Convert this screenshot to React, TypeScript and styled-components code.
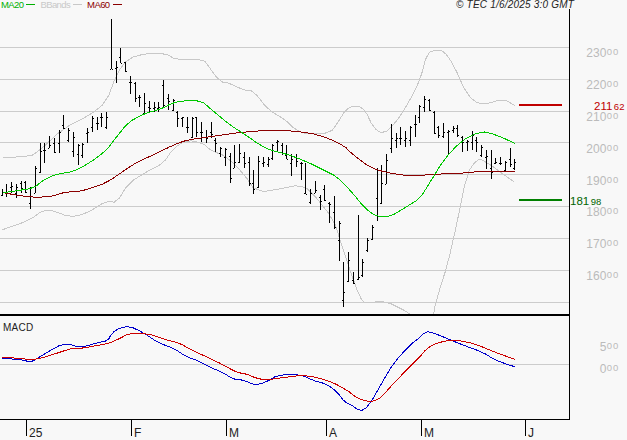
import styled, { createGlobalStyle } from "styled-components";

type Pt = [number, number];

// rounds the corners of a traced line a little
const smooth = (pts: Pt[]): Pt[] => {
  const out: Pt[] = [pts[0]];
  for (let i = 0; i < pts.length - 1; i++) {
    const [ax, ay] = pts[i];
    const [bx, by] = pts[i + 1];
    out.push([ax * 0.75 + bx * 0.25, ay * 0.75 + by * 0.25]);
    out.push([ax * 0.25 + bx * 0.75, ay * 0.25 + by * 0.75]);
  }
  out.push(pts[pts.length - 1]);
  return out;
};

// all data traced off the picture at 3x, so one unit is a third of a pixel
const line = (offsetY: number, ...parts: Pt[][]) =>
  smooth(parts.flat())
    .map(([x, y]) => `${(x / 3).toFixed(1)},${(y / 3 + offsetY).toFixed(1)}`)
    .join(" ");

const shift = (dx: number, dy: number, pts: Pt[]): Pt[] =>
  pts.map(([x, y]) => [x + dx, y + dy]);

const MA20 = line(
  0,
  [[8, 578], [50, 572], [100, 565], [130, 540], [170, 522], [220, 515], [270, 488], [320, 450], [350, 410], [385, 367], [430, 342], [480, 328], [520, 308], [550, 302], [605, 303]],
  shift(630, 0, [[0, 325], [60, 375], [100, 400], [150, 435], [185, 452], [230, 462], [290, 485], [345, 512], [380, 530], [420, 570], [465, 625], [500, 650], [540, 650], [590, 620]]),
  shift(1251, 0, [[9, 595], [40, 545], [80, 480], [130, 425], [190, 393], [240, 405], [293, 430]]),
);

const MA60 = line(
  0,
  [[8, 578], [60, 587], [100, 592], [155, 590], [190, 577], [240, 574], [270, 565], [320, 548], [375, 510], [410, 487], [470, 460], [520, 435], [560, 420]],
  shift(630, 0, [[0, 410], [50, 403], [95, 397], [170, 391], [250, 392], [330, 405], [400, 435], [430, 465], [480, 502], [530, 518], [600, 528]]),
  shift(1251, 0, [[9, 526], [70, 522], [130, 520], [200, 513], [280, 513], [293, 516]]),
);

const BAND_UP = line(
  0,
  [[8, 472], [90, 470], [120, 450], [190, 385], [270, 345], [320, 305], [350, 220], [385, 175], [440, 160], [495, 160], [530, 180], [610, 177]],
  shift(630, 0, [[0, 205], [30, 245], [60, 250], [100, 270], [130, 272], [175, 330], [220, 355], [260, 392], [290, 402], [360, 400], [385, 365], [410, 325], [440, 316], [465, 330], [490, 383], [520, 403], [560, 365], [600, 300]]),
  shift(1251, 0, [[9, 240], [30, 160], [55, 150], [80, 152], [110, 195], [150, 285], [190, 316], [260, 297], [293, 316]]),
);

// runs below the bottom of the price panel around x=420 and gets cut off there
const BAND_DOWN = line(
  0,
  [[5, 690], [90, 660], [130, 630], [160, 632], [210, 652], [260, 640], [320, 602], [350, 608], [385, 550], [440, 515], [490, 490], [520, 445], [560, 420], [610, 430]],
  shift(630, 0, [[0, 450], [50, 470], [100, 520], [140, 578], [220, 565], [265, 555], [300, 570], [372, 660]]),
  shift(630, 660, [[390, 60], [420, 150], [450, 235], [470, 252], [520, 240], [605, 282], [640, 320], [670, 320]]),
  shift(1251, 660, [[48, 282], [70, 200], [90, 140], [122, 0]]),
  shift(1251, 0, [[150, 520], [180, 478], [200, 480], [290, 545]]),
);

const MACD_LINE = line(
  220,
  [[5, 414], [45, 418], [70, 420], [92, 427], [120, 410], [150, 392], [185, 373], [210, 373], [230, 380], [255, 380], [290, 368], [323, 363], [335, 340], [360, 323], [390, 319], [430, 338], [475, 368], [520, 385], [560, 410], [600, 425]],
  shift(630, 0, [[0, 442], [40, 458], [70, 478], [100, 480], [133, 495], [165, 488], [205, 464], [275, 464], [310, 482], [350, 492], [380, 515], [405, 547], [425, 555], [450, 574], [475, 560], [515, 490], [550, 430], [600, 375]]),
  shift(1251, 0, [[9, 352], [20, 340], [37, 334], [90, 355], [130, 372], [200, 398], [230, 418], [270, 433], [293, 440]]),
);

const MACD_SIGNAL = line(
  220,
  [[5, 412], [45, 414], [85, 418], [110, 418], [145, 408], [200, 390], [215, 385], [255, 384], [280, 378], [320, 372], [350, 360], [390, 339], [440, 340], [500, 360], [540, 370], [570, 388]],
  shift(630, 0, [[0, 415], [40, 435], [80, 457], [110, 462], [140, 475], [170, 480], [210, 474], [275, 466], [320, 472], [370, 488], [410, 510], [440, 533], [470, 544], [495, 543], [515, 530], [560, 480]]),
  shift(1251, 0, [[9, 410], [25, 390], [45, 375], [75, 365], [105, 360], [130, 362], [175, 372], [230, 395], [293, 418]]),
);

// high, low, open, close
const BARS: number[][] = [
  [568, 587, 585, 575], [553, 590, 580, 575], [545, 578, 562, 558], [553, 595, 580, 562],
  [543, 578, 548, 565], [543, 578, 545, 575], [562, 628, 610, 565], [498, 580, 578, 505],
  [430, 518, 516, 452], [430, 488, 450, 450], [408, 445, 443, 435], [415, 458, 428, 455],
  [390, 460, 428, 395], [345, 388, 375, 385], [385, 425, 420, 390], [397, 470, 452, 410],
  [432, 494, 463, 435], [430, 475, 465, 432], [385, 430, 400, 397], [348, 395, 380, 355],
  [352, 390, 370, 368], [338, 382, 352, 352], [335, 388, 382, 352], [57, 208, 206, 207],
  [183, 248, 205, 200], [145, 190, 170, 188], [185, 215, 187, 213], [228, 282, 247, 247],
  [247, 305, 250, 293], [285, 320, 292, 290], [280, 342, 338, 310], [303, 335, 320, 325],
  [305, 335, 325, 322], [305, 335, 325, 322], [240, 325, 255, 315], [283, 330, 295, 302],
  [297, 332, 330, 300], [333, 380, 335, 355], [350, 380, 355, 352], [352, 400, 380, 380],
  [350, 415, 412, 355], [350, 410, 352, 395], [367, 425, 395, 395], [390, 430, 412, 415],
  [365, 415, 395, 403], [415, 455, 420, 430], [440, 470, 460, 445], [445, 498, 470, 448],
  [460, 548, 468, 533], [435, 505, 503, 485], [432, 490, 485, 460], [455, 505, 470, 490],
  [472, 558, 485, 548], [510, 583, 548, 568], [468, 565, 560, 483], [472, 502, 490, 485],
  [472, 500, 492, 478], [432, 480, 475, 435], [420, 455, 425, 423], [428, 465, 435, 458],
  [435, 478, 465, 478], [462, 527, 490, 478], [462, 500, 470, 482], [487, 540, 490, 488],
  [488, 583, 578, 582], [568, 612, 605, 580], [543, 580, 578, 570], [585, 630, 590, 603],
  [555, 602, 568, 600], [605, 670, 608, 612], [588, 688, 635, 680], [664, 782, 720, 670],
  [787, 920, 900, 875], [757, 845, 842, 780], [815, 853, 840, 850], [645, 840, 838, 830],
  [778, 832, 825, 785], [715, 755, 750, 720], [675, 720, 718, 680], [503, 663, 595, 510],
  [495, 612, 610, 550], [462, 553, 551, 480], [372, 458, 445, 415], [400, 443, 420, 415],
  [382, 435, 415, 415], [392, 440, 420, 415], [378, 437, 420, 380], [345, 410, 372, 372],
  [315, 368, 352, 318], [288, 335, 320, 298], [298, 333, 300, 330], [333, 402, 335, 400],
  [378, 415, 380, 405], [368, 415, 408, 395], [390, 462, 395, 392], [378, 400, 390, 385],
  [375, 412, 385, 405], [408, 457, 410, 425], [420, 453, 425, 423], [393, 450, 425, 405],
  [410, 455, 420, 425], [435, 472, 465, 440], [450, 508, 470, 468], [450, 537, 505, 515],
  [475, 493, 490, 485], [472, 495, 490, 488], [483, 513, 510, 485], [445, 500, 478, 492],
  [478, 510, 505, 485],
];

const barsPath = BARS.map(([high, low, open, close], i) => {
  const x = Math.round(1.67 + i * 4.747);
  const t = Math.round(high / 3);
  const b = Math.round(low / 3);
  const o = Math.round(open / 3);
  const c = Math.round(close / 3);
  return `M${x} ${t}h1v${b - t}h-1zM${x - 1} ${o}h1v1h-1zM${x + 1} ${c}h1v1h-1z`;
}).join("");

const PRICE_GRID = [47, 79, 111, 142, 174, 206, 238, 270, 302];
const PRICE_SCALE = ["230", "220", "210", "200", "190", "180", "170", "160"];
const MACD_SCALE = ["5", "0"];
const MONTHS: { label: string; width: number }[] = [
  { label: "25", width: 105 },
  { label: "F", width: 95 },
  { label: "M", width: 100 },
  { label: "A", width: 95 },
  { label: "M", width: 104 },
  { label: "J", width: 45 },
];

const GlobalStyle = createGlobalStyle`
  html, body {
    margin: 0;
    background: #f8f8f8;
  }
`;

const Page = styled.div`
  position: relative;
  width: 627px;
  height: 440px;
  overflow: hidden;
  background: #f8f8f8;
  font-family: "Liberation Sans", Arial, sans-serif;
`;

const Header = styled.div`
  display: flex;
  align-items: flex-start;
  height: 9px;
  padding-left: 1px;
  font-size: 9.5px;
  line-height: 9px;
  white-space: nowrap;
`;

const LegendItem = styled.span<{ $color: string; $gap: number }>`
  display: flex;
  align-items: center;
  gap: 3px;
  margin-right: ${(p) => p.$gap}px;
  color: ${(p) => p.$color};
  letter-spacing: -0.6px;

  &::after {
    content: "";
    width: 9px;
    height: 1px;
    background: ${(p) => p.$color};
  }
`;

const Stamp = styled.span`
  margin-left: auto;
  margin-right: 53px;
  font-size: 10px;
  font-style: italic;
  letter-spacing: 0.2px;
  color: #222;
`;

const ChartRow = styled.div<{ $height: number }>`
  display: flex;
  height: ${(p) => p.$height}px;
`;

const Plot = styled.div<{ $rule: number }>`
  position: relative;
  box-sizing: border-box;
  width: 570px;
  flex: none;
  border-right: 1px solid #000;
  border-bottom: ${(p) => p.$rule}px solid #000;

  svg {
    display: block;
  }
`;

const MacdTitle = styled.span`
  position: absolute;
  left: 3px;
  top: 7px;
  font-size: 10px;
  line-height: 10px;
  letter-spacing: 0.25px;
  color: #222;
`;

const Scale = styled.div<{ $top: number; $step: number }>`
  flex: 1;
  display: flex;
  flex-direction: column;
  align-items: flex-end;
  padding: ${(p) => p.$top}px 8px 0 0;

  > * {
    height: ${(p) => p.$step}px;
    flex: none;
  }
`;

const Tick = styled.div`
  display: flex;
  align-items: flex-start;
  color: #bbb;
  font-size: 12px;
  line-height: 12px;
`;

const Cents = styled.span`
  font-size: 9.5px;
  line-height: 9px;
  letter-spacing: 0.8px;
  margin-left: 0.5px;
`;

const TimeAxis = styled.div`
  display: flex;
  padding-left: 26px;
`;

const Month = styled.div<{ $width: number }>`
  box-sizing: border-box;
  width: ${(p) => p.$width}px;
  height: 16px;
  padding: 7px 0 0 2px;
  border-left: 1px solid #000;
  font-size: 12px;
  line-height: 12px;
  color: #222;
`;

const Level = styled.span<{ $color: string; $top: number; $left: number }>`
  position: absolute;
  top: ${(p) => p.$top}px;
  left: ${(p) => p.$left}px;
  color: ${(p) => p.$color};
  font-size: 11.5px;
  line-height: 9px;
  white-space: nowrap;

  small {
    font-size: 9.5px;
    margin-left: 1.5px;
  }
`;

function Series({ points, color }: { points: string; color: string }) {
  return (
    <polyline
      points={points}
      fill="none"
      stroke={color}
      strokeWidth="1"
      shapeRendering="crispEdges"
    />
  );
}

function PriceChart() {
  return (
    <svg width="569" height="305" viewBox="0 9 569 305">
      {PRICE_GRID.map((y) => (
        <rect key={y} x="0" y={y} width="569" height="1" fill="#cccccc" />
      ))}
      <Series points={BAND_UP} color="#c8c8c8" />
      <Series points={BAND_DOWN} color="#c8c8c8" />
      <path d={barsPath} fill="#000" />
      <Series points={MA60} color="#8b0000" />
      <Series points={MA20} color="#00c800" />
      <rect x="519" y="104" width="43" height="2" fill="#c00000" />
      <rect x="519" y="199" width="43" height="2" fill="#008000" />
    </svg>
  );
}

function MacdChart() {
  return (
    <svg width="569" height="103" viewBox="0 316 569 103">
      <rect x="0" y="364" width="569" height="1" fill="#cccccc" />
      <Series points={MACD_LINE} color="#0000cc" />
      <Series points={MACD_SIGNAL} color="#cc0000" />
    </svg>
  );
}

export default function App() {
  return (
    <Page>
      <GlobalStyle />
      <Header>
        <LegendItem $color="#00b000" $gap={5}>MA20</LegendItem>
        <LegendItem $color="#c8c8c8" $gap={5}>BBands</LegendItem>
        <LegendItem $color="#8b0000" $gap={0}>MA60</LegendItem>
        <Stamp>© TEC 1/6/2025 3:0 GMT</Stamp>
      </Header>
      <ChartRow $height={307}>
        <Plot $rule={2}>
          <PriceChart />
        </Plot>
        <Scale $top={38} $step={31.9}>
          {PRICE_SCALE.map((v) => (
            <Tick key={v}>
              {v}
              <Cents>00</Cents>
            </Tick>
          ))}
        </Scale>
      </ChartRow>
      <ChartRow $height={104}>
        <Plot $rule={1}>
          <MacdChart />
          <MacdTitle>MACD</MacdTitle>
        </Plot>
        <Scale $top={25} $step={22}>
          {MACD_SCALE.map((v) => (
            <Tick key={v}>
              {v}
              <Cents>00</Cents>
            </Tick>
          ))}
        </Scale>
      </ChartRow>
      <TimeAxis>
        {MONTHS.map((m, i) => (
          <Month key={i} $width={m.width}>
            {m.label}
          </Month>
        ))}
      </TimeAxis>
      <Level $color="#c00000" $top={102} $left={594}>
        211<small>62</small>
      </Level>
      <Level $color="#006400" $top={197} $left={570}>
        181<small>98</small>
      </Level>
    </Page>
  );
}
